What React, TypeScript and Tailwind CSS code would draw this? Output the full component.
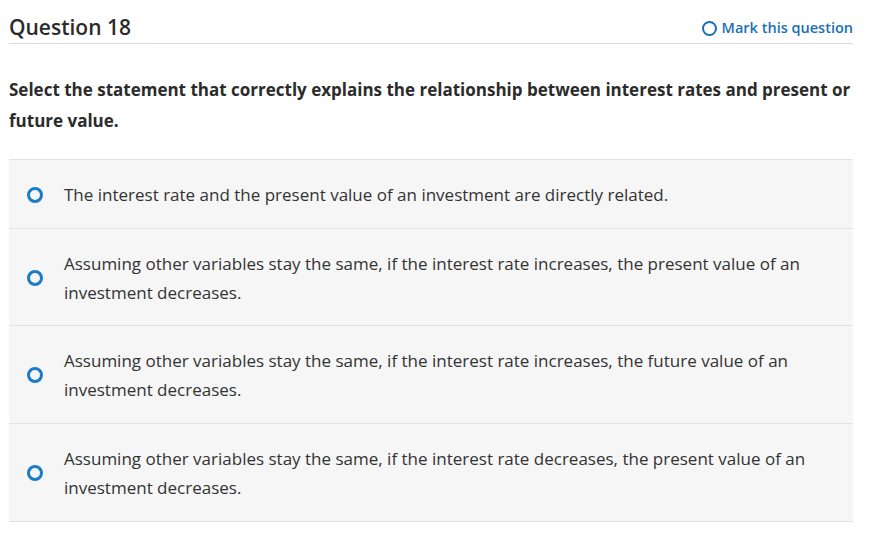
const options = [
  "The interest rate and the present value of an investment are directly related.",
  "Assuming other variables stay the same, if the interest rate increases, the present value of an investment decreases.",
  "Assuming other variables stay the same, if the interest rate increases, the future value of an investment decreases.",
  "Assuming other variables stay the same, if the interest rate decreases, the present value of an investment decreases.",
];

function Radio() {
  return (
    <span className="flex h-4 w-4 shrink-0 rounded-full border-[3px] border-[#1a7cc4]" />
  );
}

export default function App() {
  return (
    <div
      className="h-[543px] w-[873px] bg-white pl-[9px] pr-[20px] text-[#333333]"
      style={{ fontFamily: "'Open Sans', Lato, sans-serif" }}
    >
      {/* Header */}
      <div className="flex h-[44px] items-end justify-between border-b border-[#dcdcdc] pb-[2px]">
        <h1 className="text-[21px] font-semibold leading-[28px] text-[#2b2b2b]">Question 18</h1>
        <button className="mb-[2px] flex items-center gap-[5px] text-[14.5px] font-semibold text-[#1a6fb5]">
          <span className="h-[15px] w-[15px] rounded-full border-2 border-[#1a6fb5]" />
          Mark this question
        </button>
      </div>

      {/* Prompt */}
      <p className="mt-[30px] text-[17px] font-bold leading-[31px] text-[#2b2b2b]">
        Select the statement that correctly explains the relationship between interest rates and present or
        future value.
      </p>

      {/* Options */}
      <div className="mt-[23px] border-b border-[#e2e2e2]">
        {options.map((o, i) => (
          <div
            key={o}
            className={
              i === 1
                ? "flex items-center border-t border-[#e2e2e2] bg-[#f6f6f6] pt-[20px] pb-[18px] pl-[18px] pr-[40px]"
                : "flex items-center border-t border-[#e2e2e2] bg-[#f6f6f6] pt-[20px] pb-[19px] pl-[18px] pr-[40px]"
            }
          >
            <Radio />
            <span className="ml-[21px] text-[17px] leading-[29px] text-[#333333]">{o}</span>
          </div>
        ))}
      </div>
    </div>
  );
}
